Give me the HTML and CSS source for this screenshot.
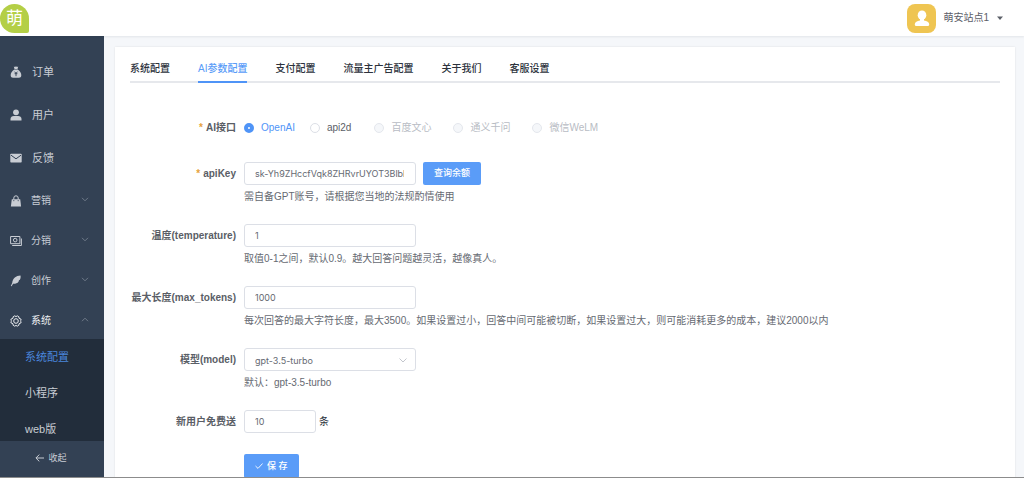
FILE: index.html
```html
<!DOCTYPE html>
<html lang="zh-CN">
<head>
<meta charset="utf-8">
<meta name="viewport" content="width=device-width, initial-scale=1">
<title>系统配置</title>
<link rel="stylesheet" href="styles.css">
</head>
<body>
<div class="app">
  <header class="topbar">
    <span class="logo">萌</span>
    <button class="account" type="button">
      <span class="avatar">
        <svg width="16" height="17" viewBox="0 0 16 17" fill="#fff"><ellipse cx="8" cy="5.200" rx="4.300" ry="4.800"/><path d="M6 8h4v2.400c3 .5 5 1.400 5.200 3.600.1 1.500-.5 2-1.700 2h-11C1.300 16 .7 15.500.8 14 1 11.800 3 10.900 6 10.400z"/></svg>
      </span>
      <span>萌安站点1</span>
      <svg class="caret" width="6" height="4" viewBox="0 0 6 4"><path d="M0 .5h6L3 4z" fill="#5c6068"/></svg>
    </button>
  </header>
  <div class="body">
    <aside class="sidebar">
      <nav class="nav">
        <a class="nav-main" href="#">
          <svg class="ico" viewBox="0 0 12 12"><path d="M3.800.5 5 1l1-.7L7 1l1.200-.5L7.500 3h-3zM4.300 3.600h3.400C10 5 11.500 7.500 11.300 9.500 11.200 11 10.300 11.700 9 11.700H3C1.700 11.700.8 11 .7 9.500.5 7.500 2 5 4.300 3.600z" fill="currentColor"/><path d="M4.600 5.700 6 7.400l1.400-1.700M4.600 7.700h2.800M6 7.400v2.800" fill="none" stroke="#334154" stroke-width=".9"/></svg>
          <span>订单</span></a>
        <a class="nav-main" href="#">
          <svg class="ico" viewBox="0 0 12 12" fill="currentColor"><circle cx="6" cy="3.300" r="2.900"/><path d="M.5 11.500V10c0-2 1.500-3 3.300-3h4.400c1.800 0 3.300 1 3.300 3v1.500z"/></svg>
          <span>用户</span></a>
        <a class="nav-main" href="#">
          <svg class="ico" viewBox="0 0 12 12"><rect x=".3" y="1.800" width="11.400" height="8.800" rx=".8" fill="currentColor"/><path d="m1 3.200 5 3.600 5-3.600" fill="none" stroke="#334154" stroke-width="1"/></svg>
          <span>反馈</span></a>
        <a class="nav-group" href="#">
          <svg class="ico" viewBox="0 0 12 12"><path d="M1.800 4.300h8.400l.9 7.200H.9z" fill="currentColor"/><path d="M3.800 4.500V3a2.200 2.200 0 0 1 4.400 0v1.500" fill="none" stroke="currentColor"/><path d="M3.800 5v1.200M8.200 5v1.200" stroke="#334154" stroke-width=".8"/></svg>
          <span>营销</span>
          <svg class="chev" viewBox="0 0 8 5"><path d="m1 .8 3 3 3-3"/></svg></a>
        <a class="nav-group" href="#">
          <svg class="ico" viewBox="0 0 12 12" fill="none" stroke="currentColor"><path d="M.6 1.500h9.300v7.200H.6zM11.400 3.500v7H2.200"/><circle cx="5.200" cy="5.100" r="1.800"/></svg>
          <span>分销</span>
          <svg class="chev" viewBox="0 0 8 5"><path d="m1 .8 3 3 3-3"/></svg></a>
        <a class="nav-group" href="#">
          <svg class="ico" viewBox="0 0 12 12"><path d="M10.500.6C6 .8 2.800 3.200 2.200 8L.8 10.900l.8.3 1.500-2.400c4 .2 6-2 5.800-3.600l1-.4c.7-1.300.9-2.800.6-4.200z" fill="currentColor"/></svg>
          <span>创作</span>
          <svg class="chev" viewBox="0 0 8 5"><path d="m1 .8 3 3 3-3"/></svg></a>
        <a class="nav-group open" href="#">
          <svg class="ico" viewBox="0 0 12 12" fill="none" stroke="currentColor"><path d="m4.500.9 1.500.6 1.500-.6 1.300.8.2 1.500 1.600.6.6 1.400-.9.800.9.800-.6 1.400L9 8.800l-.2 1.500-1.300.8-1.500-.6-1.500.6-1.300-.8L3 8.800l-1.600-.6L.8 6.800l.9-.8-.9-.8.6-1.400L3 3.200l.2-1.500z"/><circle cx="6" cy="6" r="2.300"/></svg>
          <span>系统</span>
          <svg class="chev" viewBox="0 0 8 5"><path d="m1 4.200 3-3 3 3"/></svg></a>
        <div class="submenu">
          <a class="current" href="#">系统配置</a>
          <a href="#">小程序</a>
          <a href="#">web版</a>
        </div>
      </nav>
      <button class="collapse" type="button">
        <svg width="9" height="8" viewBox="0 0 9 8" fill="none" stroke="currentColor"><path d="M9 4H1M4.300.6.900 4l3.400 3.400"/></svg>
        <span>收起</span>
      </button>
    </aside>
    <main class="main">
      <section class="card">
        <nav class="tabs">
          <a href="#">系统配置</a>
          <a class="active" href="#">AI参数配置</a>
          <a href="#">支付配置</a>
          <a href="#">流量主广告配置</a>
          <a href="#">关于我们</a>
          <a href="#">客服设置</a>
        </nav>
        <form class="form">
          <div class="row radio-row">
            <span class="label required" id="api-label">AI接口</span>
            <div class="radios" role="radiogroup" aria-labelledby="api-label">
              <div class="radio-set enabled">
                <label class="radio"><input type="radio" name="api" checked><span>OpenAI</span></label>
                <label class="radio"><input type="radio" name="api"><span>api2d</span></label>
              </div>
              <div class="radio-set">
                <label class="radio"><input type="radio" name="api" disabled><span>百度文心</span></label>
                <label class="radio"><input type="radio" name="api" disabled><span>通义千问</span></label>
                <label class="radio"><input type="radio" name="api" disabled><span>微信WeLM</span></label>
              </div>
            </div>
          </div>
          <div class="row">
            <label class="label required" for="key">apiKey</label>
            <div class="field">
              <div class="line">
                <input class="input" id="key" type="text" value="sk-Yh9ZHccfVqk8ZHRvrUYOT3BlbkFJ">
                <button class="btn" type="button">查询余额</button>
              </div>
              <p class="help">需自备GPT账号，请根据您当地的法规酌情使用</p>
            </div>
          </div>
          <div class="row">
            <label class="label" for="temp">温度(temperature)</label>
            <div class="field">
              <input class="input" id="temp" type="text" value="1">
              <p class="help">取值0-1之间，默认0.9。越大回答问题越灵活，越像真人。</p>
            </div>
          </div>
          <div class="row">
            <label class="label" for="tokens">最大长度(max_tokens)</label>
            <div class="field">
              <input class="input" id="tokens" type="text" value="1000">
              <p class="help">每次回答的最大字符长度，最大3500。如果设置过小，回答中间可能被切断，如果设置过大，则可能消耗更多的成本，建议2000以内</p>
            </div>
          </div>
          <div class="row">
            <label class="label" for="model">模型(model)</label>
            <div class="field">
              <div class="select">
                <select class="input" id="model"><option>gpt-3.5-turbo</option></select>
                <svg class="chev" viewBox="0 0 8 5"><path d="m.5.5 3.500 3.500L7.500.5"/></svg>
              </div>
              <p class="help">默认：gpt-3.5-turbo</p>
            </div>
          </div>
          <div class="row short">
            <label class="label" for="free">新用户免费送</label>
            <div class="line unit">
              <input class="input small" id="free" type="text" value="10">
              <span>条</span>
            </div>
          </div>
          <div class="row">
            <span class="label"></span>
            <button class="btn save" type="submit">
              <svg width="8" height="6" viewBox="0 0 8 6" fill="none" stroke="#fff" stroke-width=".9"><path d="M.5 3 3 5.400 7.600.5"/></svg>
              <span>保 存</span>
            </button>
          </div>
        </form>
      </section>
    </main>
  </div>
</div>
</body>
</html>
```
FILE: styles.css
```css
* { box-sizing: border-box; }
body {
  margin: 0;
  font: 10px/16px "Liberation Sans", "Noto Sans CJK SC", sans-serif;
  color: #2c323c;
}
a { color: inherit; text-decoration: none; }
button, input, select { font: inherit; color: inherit; margin: 0; }
button { border: 0; background: none; cursor: pointer; }
svg { display: block; flex: none; }

.app {
  display: flex;
  flex-direction: column;
  height: 100vh;
  overflow: hidden;
  border-bottom: 1px solid #8c8c8c;
}

.topbar {
  display: flex;
  flex: none;
  align-items: center;
  justify-content: space-between;
  height: 36px;
  padding-right: 21px;
  background: #fff;
  box-shadow: 0 1px 2px rgba(0, 21, 41, .08);
  z-index: 1;
}
.logo {
  width: 29px;
  height: 29px;
  border-radius: 50% 50% 2px 50%;
  background: #b4cf46;
  color: #fff;
  font-size: 17px;
  line-height: 29px;
  text-align: center;
}
.account {
  display: flex;
  align-items: center;
  gap: 7px;
  padding: 0;
  color: #5c6068;
}
.avatar {
  display: grid;
  place-items: center;
  width: 29px;
  height: 29px;
  border-radius: 8px;
  background: #efc552;
}
.caret { margin-left: 1px; }

.body { display: flex; flex: 1; min-height: 0; }

.sidebar {
  display: flex;
  flex: none;
  flex-direction: column;
  width: 104px;
  background: #334154;
  color: #c9cdd4;
}
.nav { flex: 1; min-height: 0; padding-top: 14px; overflow: hidden; }
.nav-main, .nav-group { display: flex; align-items: center; padding: 0 15px 0 10px; }
.nav-main { height: 43px; gap: 10px; font-size: 11px; }
.nav-group { height: 40px; padding-top: 3px; gap: 9px; }
.nav-group.open { color: #eceef1; }
.ico { width: 12px; height: 12px; }
.chev { width: 8px; height: 5px; fill: none; stroke: #7f8997; stroke-width: .8; }
.nav-group .chev { margin: 0 0 3px auto; }
.submenu { background: #222d3b; font-size: 11px; }
.submenu a { display: block; height: 36px; padding-left: 25px; line-height: 36px; }
.submenu .current { color: #4a86dc; }
.collapse {
  display: flex;
  flex: none;
  align-items: center;
  justify-content: center;
  gap: 4px;
  height: 36px;
  padding: 0 2px 3px 0;
  font-size: 9px;
}

.main { flex: 1; min-width: 0; padding: 11px 9px 0 11px; background: #f5f7fa; overflow: hidden; }
.card {
  min-height: 100%;
  padding: 14px 15px 20px;
  background: #fff;
  box-shadow: 0 0 2px rgba(0, 0, 0, .1);
}

.tabs { display: flex; gap: 28px; border-bottom: 2px solid #e6e8ec; font-weight: 500; }
.tabs a { margin-bottom: -2px; padding-bottom: 4px; border-bottom: 2px solid transparent; }
.tabs .active { border-color: #4f94f7; color: #5a9cf8; }

.form { display: flex; flex-direction: column; gap: 16px; padding-top: 33px; }
.row { display: flex; gap: 8px; line-height: 23px; }
.radio-row { margin-bottom: 7px; }
.short { margin-bottom: 5px; }
.label { flex: none; width: 106px; color: #5a5e66; font-weight: 700; text-align: right; white-space: nowrap; }
.required::before { content: "*"; margin-right: 3px; color: #e6a23c; font-weight: 700; }
.field { flex: 1; min-width: 0; }
.line { display: flex; gap: 7px; }
.unit { gap: 3px; }

.radios { display: flex; flex-wrap: wrap; gap: 23px; }
.radio-set { display: flex; gap: 22px; color: #b8bcc4; }
.enabled { gap: 15px; color: #5a5e66; font-weight: 500; }
.radio { display: flex; align-items: center; gap: 7px; }
.radio input {
  appearance: none;
  width: 10px;
  height: 10px;
  border: 1px solid #dcdfe6;
  border-radius: 50%;
  background: #fff;
}
.radio input:checked { border: 4px solid #4f94f7; }
.radio input:checked + span { color: #4f94f7; }
.radio input:disabled { background: #f5f7fa; border-color: #e4e7ed; }

.input {
  display: block;
  appearance: none;
  width: 172px;
  height: 23px;
  padding: 0 11px 0 10px;
  border: 1px solid #dcdfe6;
  border-radius: 3px;
  background: #fff;
  color: #666a72;
  font-family: Inter, "Noto Sans CJK SC", sans-serif;
  font-size: 9px;
}
.small { width: 72px; }
.select { position: relative; width: 172px; }
.select .chev { position: absolute; top: 10px; right: 9px; stroke: #b4b8c0; }
.help { margin: 0; color: #666a72; }

.btn {
  display: flex;
  align-items: center;
  justify-content: center;
  height: 23px;
  padding: 0 11px;
  border-radius: 2px;
  background: #5a9cf8;
  color: #fff;
  font-size: 9px;
  font-weight: 500;
}
.save { gap: 4px; height: 24px; }
```
